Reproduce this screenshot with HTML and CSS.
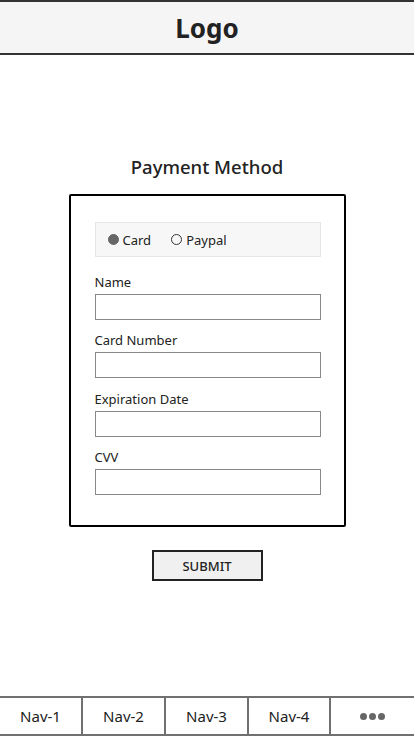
FILE: index.html
```html
<!DOCTYPE html>
<html>
<head>
<meta charset="utf-8">
<link rel="stylesheet" href="styles.css">
</head>
<body>
<div class="app">
  <header class="header"><span class="logo">Logo</span></header>
  <main class="main">
    <h1 class="title">Payment Method</h1>
    <form class="card">
      <div class="methods">
        <span class="method"><span class="radio radio-on"></span>Card</span>
        <span class="method"><span class="radio"></span>Paypal</span>
      </div>
      <div class="field"><label class="label">Name</label><div class="input"></div></div>
      <div class="field"><label class="label">Card Number</label><div class="input"></div></div>
      <div class="field field-wide"><label class="label">Expiration Date</label><div class="input"></div></div>
      <div class="field"><label class="label">CVV</label><div class="input"></div></div>
    </form>
    <button class="submit" type="button">SUBMIT</button>
  </main>
  <nav class="nav">
    <div class="nav-item">Nav-1</div>
    <div class="nav-item">Nav-2</div>
    <div class="nav-item">Nav-3</div>
    <div class="nav-item">Nav-4</div>
    <div class="nav-item"><span class="dots"><i></i><i></i><i></i></span></div>
  </nav>
</div>
</body>
</html>
```
FILE: styles.css
```css
* { box-sizing: border-box; }
html, body { margin: 0; padding: 0; background: #fff; }
body { font-family: "Noto Sans", "DejaVu Sans", sans-serif; color: #222; }
.app { width: 414px; height: 736px; display: flex; flex-direction: column; }
.header {
  height: 55px; background: #f5f5f5;
  border-top: 2px solid #333; border-bottom: 2px solid #333;
  display: flex; align-items: center; justify-content: center;
}
.logo { font-size: 26px; font-weight: 700; color: #222; }
.main { flex: 1; display: flex; flex-direction: column; align-items: center; padding-top: 99px; }
.title { margin: 0; font-size: 18.5px; font-weight: 500; line-height: 26px; color: #222; }
.card {
  margin-top: 14px; width: 277px; border: 2px solid #000; border-radius: 2px;
  padding: 26px 23px 30px 24px; display: flex; flex-direction: column;
}
.methods {
  height: 35px; background: #f7f7f7; border: 1px solid #e6e6e6;
  display: flex; align-items: center; gap: 20px; padding-left: 12px;
  font-size: 13px; margin-bottom: 17px;
}
.method { display: flex; align-items: center; gap: 4px; }
.radio { width: 11px; height: 11px; border-radius: 50%; border: 1.3px solid #333; }
.radio-on { background: #666; border-color: #666; }
.field { display: flex; flex-direction: column; }
.field + .field { margin-top: 12px; }
.field + .field-wide { margin-top: 13px; }
.label { font-size: 13px; line-height: 16px; color: #222; margin-bottom: 4px; }
.input { height: 26px; border: 1px solid #888; background: #fff; }
.submit {
  margin-top: 23px; width: 111px; height: 31px; border: 2px solid #222;
  background: #f0f0f0; font-family: inherit; font-size: 13px; font-weight: 500; color: #222;
  padding: 0;
}
.nav {
  height: 40px; border-top: 2px solid #707070; border-bottom: 2px solid #707070;
  display: grid; grid-template-columns: 83px 83px 83px 82px 1fr;
}
.nav-item {
  display: flex; align-items: center; justify-content: center;
  font-size: 15px; color: #222; border-right: 2px solid #707070;
}
.nav-item:last-child { border-right: none; }
.dots { display: flex; gap: 2px; }
.dots i { width: 7px; height: 7px; border-radius: 50%; background: #666; }
```
